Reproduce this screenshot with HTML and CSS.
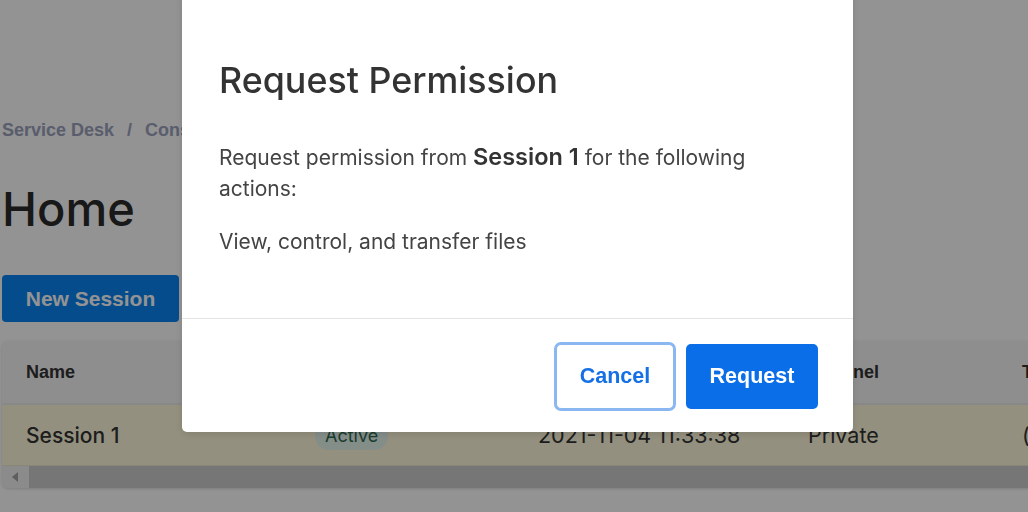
FILE: index.html
```html
<!DOCTYPE html>
<html lang="en">
<head>
<meta charset="utf-8">
<title>Home - Service Desk</title>
<link rel="stylesheet" href="styles.css">
</head>
<body>
<main class="page">
  <nav class="crumbs"><span>Service Desk</span><span class="sep">/</span><span>Console</span></nav>
  <h1 class="page-title">Home</h1>
  <div class="actions"><button class="btn-new">New Session</button></div>
  <section class="table-card">
    <div class="table">
      <div class="tr th">
        <div class="td">Name</div>
        <div class="td">Status</div>
        <div class="td">Created</div>
        <div class="td">Channel</div>
        <div class="td">Type</div>
      </div>
      <div class="tr row-hl">
        <div class="td name">Session 1</div>
        <div class="td"><span class="badge">Active</span></div>
        <div class="td">2021-11-04 11:33:38</div>
        <div class="td">Private</div>
        <div class="td">(none)</div>
      </div>
    </div>
    <div class="hscroll">
      <div class="hs-btn"><span class="hs-arrow"></span></div>
      <div class="hs-thumb"></div>
    </div>
  </section>
</main>

<div class="overlay">
  <div class="modal" role="dialog" aria-modal="true">
    <div class="modal-body">
      <h2 class="modal-title">Request Permission</h2>
      <p class="modal-text">Request permission from <strong>Session 1</strong> for the following actions:</p>
      <p class="modal-text">View, control, and transfer files</p>
    </div>
    <div class="modal-footer">
      <button class="btn btn-cancel">Cancel</button>
      <button class="btn btn-primary">Request</button>
    </div>
  </div>
</div>
</body>
</html>
```

FILE: styles.css
```css
* { box-sizing: border-box; }
html, body { margin: 0; padding: 0; }
body {
  background: #ffffff;
  font-family: Inter, "Liberation Sans", Arial, sans-serif;
  color: #333;
  width: 1028px;
  height: 512px;
  overflow: hidden;
}
.page {
  padding: 118px 0 0 2px;
  display: flex;
  flex-direction: column;
}
.crumbs {
  font-family: "Liberation Sans", Arial, sans-serif;
  font-weight: 700;
  font-size: 18px;
  line-height: 24px;
  color: #9aa2bc;
  display: flex;
  gap: 13px;
  white-space: nowrap;
}
.page-title {
  margin: 38px 0 0 0;
  font-size: 47px;
  font-weight: 500;
  line-height: 58px;
  color: #2b2b2b;
}
.actions { margin-top: 37px; }
.btn-new {
  font-family: "Liberation Sans", Arial, sans-serif;
  font-weight: 700;
  font-size: 21px;
  color: #fff;
  background: #0a84f5;
  border: 0;
  border-radius: 4px;
  width: 177px;
  height: 47px;
  padding: 0;
}
.table-card {
  margin-top: 19px;
  width: 1100px;
  border-radius: 6px;
  background: #fff;
  box-shadow: 0 1px 3px rgba(0,0,0,0.15);
  overflow: hidden;
}
.tr {
  display: grid;
  grid-template-columns: 289px 223px 270px 214px 104px;
  align-items: center;
}
.td { padding-left: 24px; white-space: nowrap; }
.th {
  height: 64px;
  background: #f6f6f6;
  border-bottom: 2px solid #ececec;
  font-family: "Liberation Sans", Arial, sans-serif;
  font-weight: 700;
  font-size: 18px;
  color: #333;
}
.row-hl {
  height: 61px;
  background: #fffadc;
  font-size: 21.5px;
  color: #333;
  border-bottom: 1px solid #ece9d2;
}
.row-hl .name { font-size: 21px; font-weight: 500; }
.badge {
  display: inline-block;
  font-size: 18px;
  color: #2f6b50;
  background: #e6f6ee;
  border-radius: 14px;
  padding: 2px 10px;
  line-height: 24px;
}
.hscroll {
  display: flex;
  height: 22px;
  background: #f1f1f1;
}
.hs-btn {
  width: 25px;
  display: flex;
  align-items: center;
  justify-content: center;
}
.hs-arrow {
  width: 0; height: 0;
  border-top: 5px solid transparent;
  border-bottom: 5px solid transparent;
  border-right: 6px solid #a3a3a3;
}
.hs-thumb {
  flex: 1;
  margin: 0 0 0 2px;
  background: #cdcdcd;
}

.overlay {
  position: fixed;
  inset: 0;
  background: rgba(0,0,0,0.424);
}
.modal {
  position: absolute;
  left: 182px;
  top: -8px;
  width: 671px;
  background: #fff;
  border-radius: 5px;
  box-shadow: 0 2px 8px rgba(0,0,0,0.12);
}
.modal-body {
  padding: 67px 37px 61px 37px;
}
.modal-title {
  margin: 0;
  font-size: 35.8px;
  font-weight: 500;
  line-height: 42px;
  color: #333;
}
.modal-text {
  margin: 40px 0 0 0;
  font-size: 21px;
  line-height: 31px;
  color: #444;
  max-width: 560px;
}
.modal-text + .modal-text { margin-top: 22px; }
.modal-text strong { font-weight: 600; font-size: 23.5px; color: #333; }
.modal-footer {
  border-top: 1px solid #e4e4e4;
  padding: 25px 35px 23px 35px;
  display: flex;
  justify-content: flex-end;
  gap: 12px;
}
.btn {
  font-family: "Liberation Sans", Arial, sans-serif;
  font-weight: 700;
  font-size: 21.5px;
  height: 65px;
  border-radius: 5px;
  padding: 0;
}
.btn-cancel {
  width: 118px;
  background: #fff;
  color: #1570e6;
  border: 1px solid #8ab6f2;
  box-shadow: 0 0 0 2px #8ab6f2;
}
.btn-primary {
  width: 132px;
  background: #0a6ee9;
  color: #fff;
  border: 0;
}
```
